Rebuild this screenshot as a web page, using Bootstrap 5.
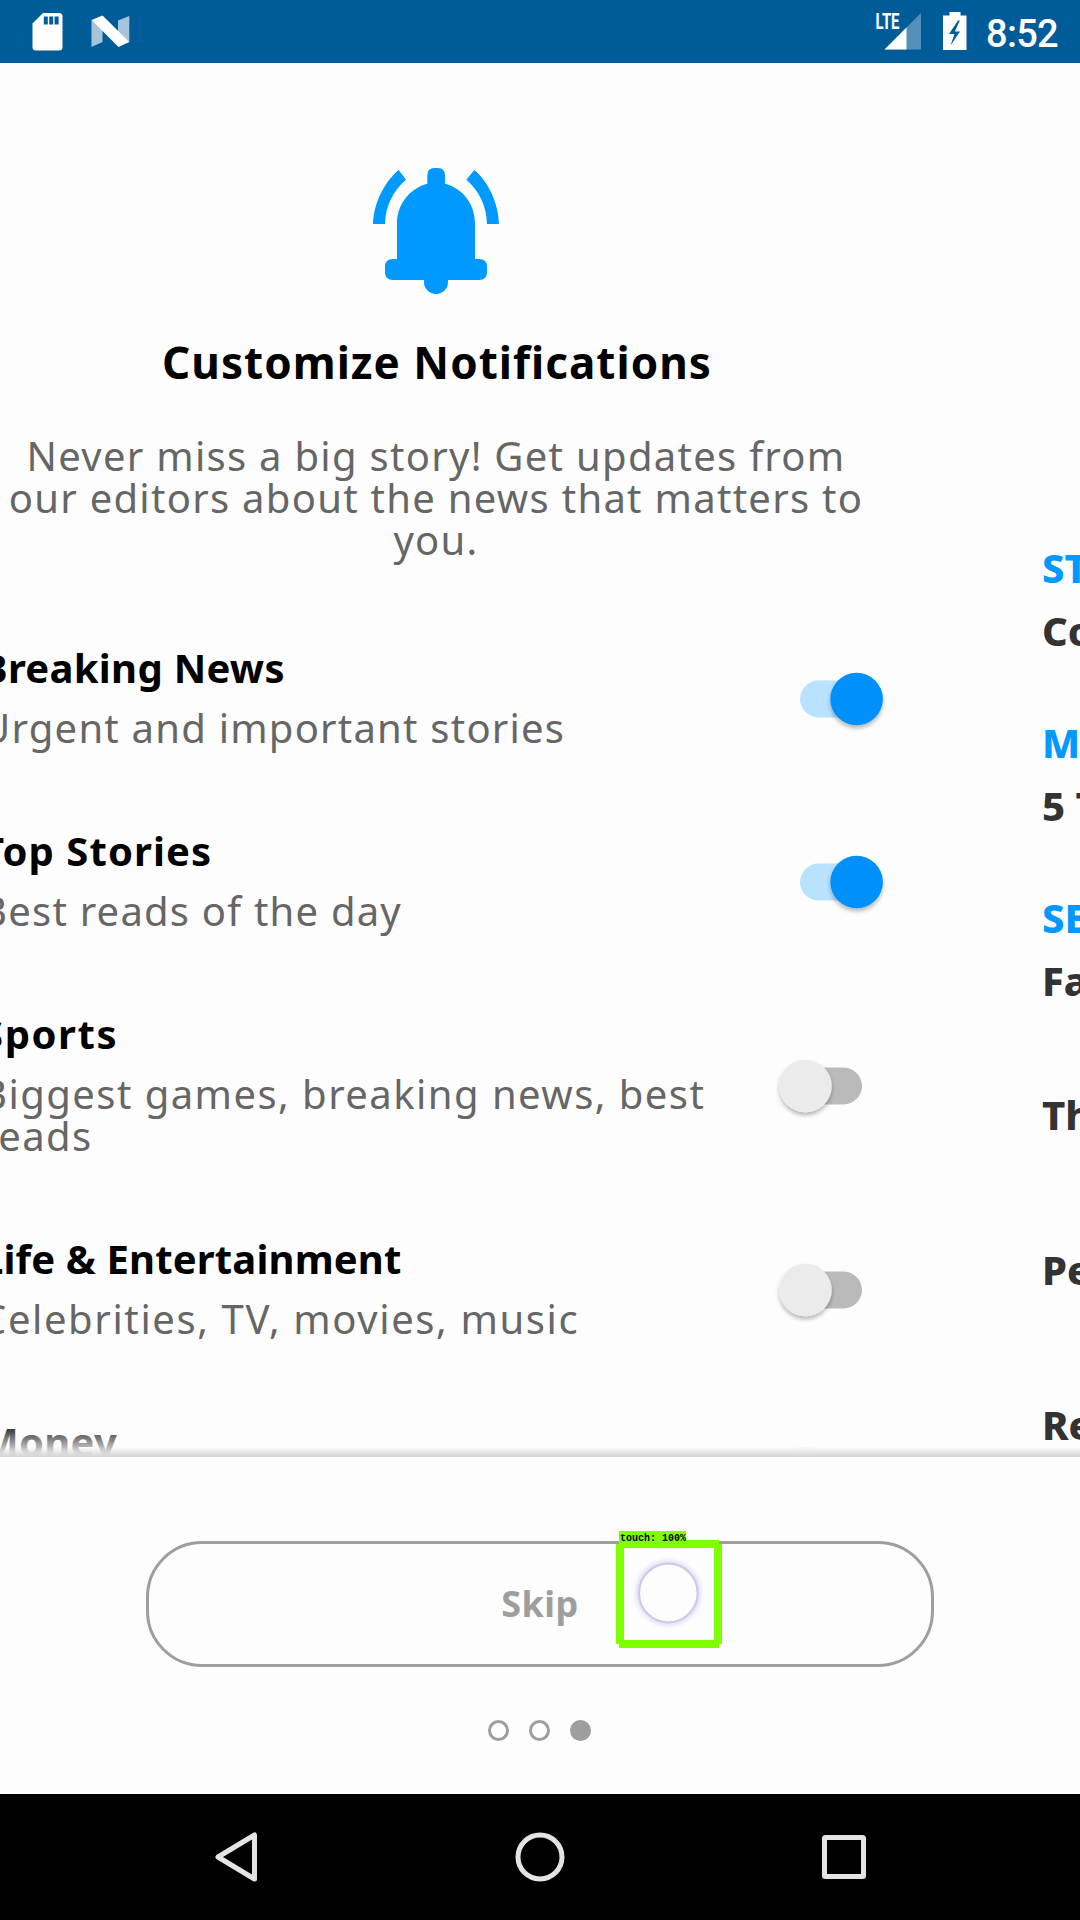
<!DOCTYPE html>
<html lang="en">
<head>
<meta charset="utf-8">
<meta name="viewport" content="width=device-width, initial-scale=1">
<title>Customize Notifications</title>
<link href="https://cdn.jsdelivr.net/npm/bootstrap@5.3.0/dist/css/bootstrap.min.css" rel="stylesheet">
<style>
body{width:1080px;height:1920px;overflow:hidden;background:#fdfdfd;font-family:"Noto Sans","Open Sans",sans-serif;color:#000}
svg{display:block;flex:none;overflow:visible}
.status-bar{height:63px;background:#005c98;padding:0 22px 0 31px}
.clock{font:500 38px/63px Roboto,sans-serif;color:#fff;letter-spacing:-.7px;padding-top:3px}
.pager{height:1394px;margin-left:-104px;width:1184px}
.page-prefs{width:1080px;padding:0 90px 0 85px;height:1394px}
.page-next{width:104px;padding:484px 0 0 66px;font-weight:800;font-size:40px;line-height:42px;white-space:nowrap;color:#333}
.bell-icon{margin:77px 0 0 8px}
.page-head{margin-left:5px}
.page-title{font-size:44px;line-height:52px;letter-spacing:1.03px;margin:16px 0 0 2px;font-weight:700}
.intro-copy{font-size:40px;line-height:42px;letter-spacing:1.28px;color:#666;margin:47px 0 0;white-space:nowrap}
.pref-list{margin-top:47px}
.pref-row{min-height:183px;padding:39px 3px 42px 0}
.pref-row svg{margin-top:1px}
.pref-name{font-size:40px;line-height:42px;font-weight:700;letter-spacing:.3px}
.pref-note{font-size:40px;line-height:42px;margin-top:18px;color:#666;letter-spacing:1.22px;white-space:nowrap}
.ls-wide{letter-spacing:1.45px}.ls-wider{letter-spacing:1.6px}.ls-tight{letter-spacing:.15px}.ls-mid{letter-spacing:1.1px}
.fade-edge{bottom:0;left:0;width:1080px;height:36px;background:linear-gradient(rgba(253,253,253,0),#fdfdfd)}
.bar-shade{bottom:0;left:0;width:1184px;height:10px;background:linear-gradient(rgba(205,205,205,0),#d3d3d3)}
.feed-cat{color:#09f;margin-bottom:21px}
.feed-block{margin-bottom:70px}
.feed-block.last-cat{margin-bottom:92px}
.feed-line{margin-bottom:113px}
.action-area{height:337px;padding-top:84px;background:#fdfdfd}
.skip-btn,.skip-btn:hover{width:788px;height:126px;border:3px solid #9e9e9e;border-radius:56px;color:#9e9e9e;background:transparent;font-size:36px;font-weight:700;letter-spacing:.5px;padding:0 0 1px;line-height:42px}
.touch-mark{left:616px;top:-17px}
.page-dot{width:21px;height:21px;border:3px solid #9e9e9e;border-radius:50%}
.page-dot.current{background:#9e9e9e}
.dots-row{gap:20px;margin:53px 2px 0 0}
.nav-keys{height:126px;background:#000}
</style>
<script src="https://cdn.jsdelivr.net/npm/bootstrap@5.3.0/dist/js/bootstrap.bundle.min.js"></script>
</head>
<body class="d-flex flex-column">
<svg width="0" height="0" class="position-absolute">
  <defs>
    <filter id="knobShade" x="-30%" y="-30%" width="160%" height="170%"><feDropShadow dx="0" dy="3" stdDeviation="2.2" flood-color="#000" flood-opacity=".28"/></filter>
    <symbol id="toggleOn" viewBox="0 0 104 66" overflow="visible"><rect x="21" y="14.500" width="62" height="37" rx="18.500" fill="#b9e2ff"/><circle cx="77.600" cy="33" r="26.300" fill="#0090fc" filter="url(#knobShade)"/></symbol>
    <symbol id="toggleOff" viewBox="0 0 104 66" overflow="visible"><rect x="21" y="14.500" width="62" height="37" rx="18.500" fill="#bababa"/><circle cx="26.500" cy="33" r="26.300" fill="#ebebeb" filter="url(#knobShade)"/></symbol>
  </defs>
</svg>

<header class="status-bar d-flex justify-content-between flex-shrink-0">
  <svg width="100" height="63" viewBox="0 0 100 63">
    <path d="M12 13H28Q31.500 13 31.500 16.500V47Q31.500 50.500 28 50.500H5Q1.500 50.500 1.500 47V23.500Z" fill="#fff"/>
    <path d="M12.800 16.500h4v8h-4zM18.200 16.500h4v8h-4zM23.600 16.500h4v8h-4z" fill="#005c98"/>
    <path d="M60.500 20V47L71.500 42V28Z" fill="#a5c4dc"/><path d="M98.300 16V42L87 37V20.500Z" fill="#a5c4dc"/>
    <path d="M60.500 20L71.500 15.500 98.300 42 87.500 47Z" fill="#fff"/>
  </svg>
  <div class="d-flex">
    <svg width="112" height="63" viewBox="0 0 112 63">
      <path d="M47 13V49.500H10.500Z" fill="#5490ba"/><path d="M32.500 27.500V49.500H10.500Z" fill="#fff"/>
      <text x="1.500" y="29" font-family="Roboto" font-weight="700" font-size="22" textLength="24" lengthAdjust="spacingAndGlyphs" fill="#fff">LTE</text>
      <path d="M69 15.500h6.500V12h11v3.500H92.500V50H69Z" fill="#fff"/>
      <path d="M84 20.500L75 34h5.500l-4 11.500L86 31.500h-5.200l5-11Z" fill="#005c98"/>
    </svg>
    <div class="clock">8:52</div>
  </div>
</header>

<main class="pager d-flex position-relative overflow-hidden flex-shrink-0">
  <section class="page-prefs position-relative overflow-hidden">
    <div class="page-head d-flex flex-column align-items-center text-center">
      <svg class="bell-icon" width="200" height="180" viewBox="0 0 600 540" fill="#09f">
        <path d="M262 106Q262 84 284 84H293Q315 84 315 106V131C371 146 405 194 405 250V357H417Q441 357 441 381V397Q441 420 417 420H324V427C324 447 308 462 288 462S252 447 252 427V420H159Q135 420 135 397V381Q135 357 159 357H171V250C171 194 207 146 262 131Z"/>
        <path d="M176 90L198 119C160 151 136 198 135 252H99C101 190 133 126 176 90ZM403 90L379 119C417 151 440 198 441 252H477C475 190 446 126 403 90Z"/>
      </svg>
      <h1 class="page-title">Customize Notifications</h1>
      <p class="intro-copy">Never miss a big story! Get updates from<br>our editors about the news that matters to<br>you.</p>
    </div>
    <div class="pref-list">
      <div class="pref-row d-flex justify-content-between align-items-center">
        <div><div class="pref-name">Breaking News</div><div class="pref-note">Urgent and important stories</div></div>
        <svg width="104" height="66"><use href="#toggleOn"/></svg>
      </div>
      <div class="pref-row d-flex justify-content-between align-items-center">
        <div><div class="pref-name ls-mid">Top Stories</div><div class="pref-note">Best reads of the day</div></div>
        <svg width="104" height="66"><use href="#toggleOn"/></svg>
      </div>
      <div class="pref-row d-flex justify-content-between align-items-center">
        <div><div class="pref-name ls-wider">Sports</div><div class="pref-note ls-wide">Biggest games, breaking news, best<br>reads</div></div>
        <svg width="104" height="66"><use href="#toggleOff"/></svg>
      </div>
      <div class="pref-row d-flex justify-content-between align-items-center">
        <div><div class="pref-name ls-tight">Life &amp; Entertainment</div><div class="pref-note ls-wider">Celebrities, TV, movies, music</div></div>
        <svg width="104" height="66"><use href="#toggleOff"/></svg>
      </div>
      <div class="pref-row d-flex justify-content-between align-items-center">
        <div class="align-self-start"><div class="pref-name">Money</div></div>
        <svg width="104" height="66"><use href="#toggleOff"/></svg>
      </div>
    </div>
    <div class="fade-edge position-absolute"></div>
  </section>
  <section class="page-next flex-shrink-0">
    <div class="feed-block"><div class="feed-cat">ST</div><div>Co</div></div>
    <div class="feed-block"><div class="feed-cat">M</div><div>5 T</div></div>
    <div class="feed-block last-cat"><div class="feed-cat">SE</div><div>Fa</div></div>
    <div class="feed-line">Th</div><div class="feed-line">Pe</div><div>Re</div>
  </section>
  <div class="bar-shade position-absolute"></div>
</main>

<footer class="action-area position-relative flex-shrink-0 d-flex flex-column align-items-center">
  <div class="position-relative w-100 d-flex justify-content-center">
    <button class="btn skip-btn" type="button">Skip</button>
    <svg class="touch-mark position-absolute" width="110" height="130" viewBox="0 0 110 130">
      <defs><filter id="soft" x="-30%" y="-30%" width="160%" height="160%"><feGaussianBlur stdDeviation="2.2"/></filter></defs>
      <rect x="3" y="7" width="67" height="14" fill="#80ff00"/>
      <rect x="8" y="24" width="90" height="92" fill="#fdfdfd"/>
      <circle cx="52.300" cy="69" r="30" fill="none" stroke="#dcdcf8" stroke-width="5" filter="url(#soft)"/>
      <circle cx="52.300" cy="69" r="29.300" fill="#fdfdfd" stroke="#cfcbe4" stroke-width="2.200"/>
      <path d="M3 16H103V20H106V120H103V124H3V120H0V20H3ZM8 24V116H98V24Z" fill="#80ff00" fill-rule="evenodd"/>
      <text x="4" y="17" font-family="Liberation Mono" font-weight="700" font-size="10" textLength="66">touch: 100%</text>
    </svg>
  </div>
  <div class="dots-row d-flex">
    <span class="page-dot"></span><span class="page-dot"></span><span class="page-dot current"></span>
  </div>
</footer>

<nav class="nav-keys d-flex justify-content-center flex-shrink-0">
  <svg width="1080" height="126" viewBox="0 0 1080 126" fill="none" stroke="#e4e4e4" stroke-width="5" stroke-linejoin="round">
    <path d="M254.500 41V85L218 63Z"/><circle cx="540" cy="63" r="22"/><rect x="824.500" y="43.500" width="39" height="39" rx="1"/>
  </svg>
</nav>
</body>
</html>
